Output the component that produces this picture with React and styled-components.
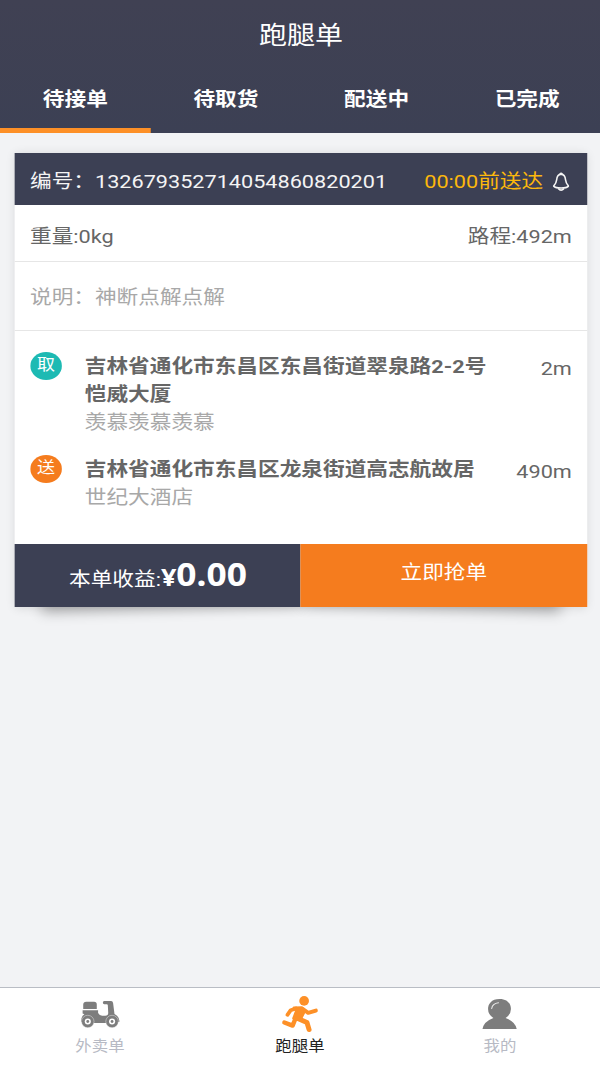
import styled, { createGlobalStyle } from 'styled-components'
import { useState } from 'react'

const tabs = ['待接单', '待取货', '配送中', '已完成']

export default function App() {
  const [tab, setTab] = useState(0)
  return (
    <>
      <GlobalStyle />
      <Screen>
        <Header>
          <Title>跑腿单</Title>
          <Tabs>
            {tabs.map((name, i) => (
              <Tab key={name} $active={tab === i} onClick={() => setTab(i)}>{name}</Tab>
            ))}
          </Tabs>
        </Header>

        <Main>
          <Card>
            <CardHead>
              <span>编号：132679352714054860820201</span>
              <Deadline>
                <span>00:00前送达</span>
                <BellIcon />
              </Deadline>
            </CardHead>
            <InfoRow>
              <span>重量:0kg</span>
              <span>路程:492m</span>
            </InfoRow>
            <NoteRow>说明：神断点解点解</NoteRow>
            <Stops>
              <Stop>
                <Badge $color="#1dbab3">取</Badge>
                <Place>
                  <Address>吉林省通化市东昌区东昌街道翠泉路2-2号恺威大厦</Address>
                  <Detail>羡慕羡慕羡慕</Detail>
                </Place>
                <Distance>2m</Distance>
              </Stop>
              <Stop>
                <Badge $color="#f57c1e">送</Badge>
                <Place>
                  <Address>吉林省通化市东昌区龙泉街道高志航故居</Address>
                  <Detail>世纪大酒店</Detail>
                </Place>
                <Distance>490m</Distance>
              </Stop>
            </Stops>
            <CardFoot>
              <Income>
                本单收益:<Yen>¥</Yen><Amount>0.00</Amount>
              </Income>
              <GrabButton>立即抢单</GrabButton>
            </CardFoot>
          </Card>
        </Main>

        <NavBar>
          <NavItem>
            <ScooterIcon />
            外卖单
          </NavItem>
          <NavItem $active>
            <RunnerIcon />
            跑腿单
          </NavItem>
          <NavItem>
            <UserIcon />
            我的
          </NavItem>
        </NavBar>
      </Screen>
    </>
  )
}

function BellIcon() {
  return (
    <Bell viewBox="0 0 18 20" preserveAspectRatio="none" fill="none" stroke="#f4f4f4" strokeWidth="1.6" strokeLinejoin="round">
      <path d="M9 2.200C6 2.400 4.700 5 4.400 8C4.100 11 3 12.600 1.300 14.500C3 16.200 5 16.500 9 16.500S15 16.200 16.700 14.500C15 12.600 13.900 11 13.600 8C13.300 5 12 2.400 9 2.200Z" />
      <path d="M7.800 2.200Q9 .4 10.200 2.200M6 16.800Q9 20.400 12 16.800" />
    </Bell>
  )
}

function ScooterIcon() {
  return (
    <NavIcon viewBox="0 0 40 40" preserveAspectRatio="none" fill="#7d7d7d">
      <path d="M3.300 13V8.700Q3.300 5.700 6.300 5.700H14Q16.700 5.700 16.700 8.500V13Z" />
      <path d="M2.700 14.200H18V17Q19.500 19.800 22 19.800H25Q28 19.800 28 17L27.600 9.300Q27.600 8.200 26.500 8.200H24Q22.700 8.200 22.700 6.600T24 5H30.800Q32.500 5 32.800 7L34.200 18Q38.800 20 39.200 25.500L36 27H3L1.200 25.500Q1 20.500 4.500 18.300L2.700 17.500Z" />
      <g stroke="#fff" strokeWidth=".4">
        <circle cx="7.800" cy="25.500" r="6.200" />
        <circle cx="31.800" cy="25.500" r="6.200" />
      </g>
      <circle cx="7.800" cy="25.500" r="3" fill="#fff" />
      <circle cx="31.800" cy="25.500" r="3" fill="#fff" />
      <circle cx="7.800" cy="25.500" r="1.400" />
      <circle cx="31.800" cy="25.500" r="1.400" />
    </NavIcon>
  )
}

function RunnerIcon() {
  return (
    <NavIcon viewBox="0 0 40 40" preserveAspectRatio="none" fill="none" stroke="#fd9027" strokeLinecap="round" strokeLinejoin="round">
      <circle cx="23.700" cy="4.900" r="4.800" fill="#fd9027" stroke="none" />
      <path d="M15.500 12.500L10.500 14.200L7.200 18.800" strokeWidth="3.800" />
      <path d="M22.500 13L27.700 16.900L35.300 14.600" strokeWidth="3.900" />
      <path d="M13.500 11.600L21.500 11.300L24.800 14.500L20 24L13 22.500L15.800 15Z" fill="#fd9027" strokeWidth="2.200" />
      <path d="M15 23L12.300 29.600L4.200 26.500" strokeWidth="4.400" />
      <path d="M17.500 22.500L26.500 26.500L28.600 33.600" strokeWidth="4.900" />
    </NavIcon>
  )
}

function UserIcon() {
  return (
    <NavIcon viewBox="0 0 40 40" preserveAspectRatio="none">
      <path fill="#7d7d7d" d="M20 3C12 3 8.700 8 8.700 13Q8.700 18.500 14 22Q4.500 25.500 3.200 33H37Q35.500 25.500 26 22Q31.300 18.500 31.300 13C31.300 8 28 3 20 3Z" />
      <path fill="none" stroke="#e8e8e8" strokeWidth="1.100" strokeLinecap="round" d="M12.300 12.500Q13 7.500 19 6.700" />
    </NavIcon>
  )
}

const GlobalStyle = createGlobalStyle`
  * { box-sizing: border-box; }
  body {
    margin: 0;
    overflow: hidden;
    background: #f2f3f5;
  }
`
// the screen is stretched sideways: 533.33 * 1.125 = 600
const Screen = styled.div`
  width: 534px;
  height: 1067px;
  display: flex;
  flex-direction: column;
  transform: scaleX(1.125);
  transform-origin: 0 0;
  background: #f2f3f5;
  color: #666;
  font-family: Roboto, "Noto Sans CJK SC", sans-serif;
  font-size: 19.25px;
  white-space: nowrap;
`
const Header = styled.header`
  height: 132.6px;
  color: #fff;
  background: linear-gradient(#404153, #3c4054);
`
const Title = styled.h1`
  margin: 0;
  height: 66px;
  padding-left: 1px;
  line-height: 71px;
  text-align: center;
  font-size: 24.9px;
  font-weight: 400;
`
const Tabs = styled.div`
  display: flex;
  height: 66.6px;
`
const Tab = styled.div`
  flex: 0 0 133.9px;
  text-align: center;
  line-height: 68.500px;
  font-weight: 700;
  border-bottom: 5px solid ${props => props.$active ? '#fd9027' : 'transparent'};
`
const Main = styled.main`
  flex: 1;
  padding: 20.6px 12.4px 0 13.33px;
`
const Card = styled.section`
  position: relative;
  background: #fff;
  box-shadow: 0 1px 9px rgba(0, 0, 0, .12);

  /* lifted corners */
  &::before, &::after {
    content: '';
    position: absolute;
    z-index: -1;
    bottom: 16px;
    width: 45%;
    height: 40px;
    box-shadow: 0 17px 13px rgba(0, 0, 0, .3);
  }
  &::before {
    left: 23px;
    transform: rotate(-2deg);
  }
  &::after {
    right: 23px;
    transform: rotate(2deg);
  }
`
const CardHead = styled.div`
  display: flex;
  justify-content: space-between;
  height: 52px;
  padding: 0 13.33px;
  line-height: 57px;
  color: #f4f4f4;
  background: #3c4054;
`
const Deadline = styled.span`
  display: flex;
  align-items: flex-start;
  gap: 8px;
  padding-right: 2px;
  color: #fcb80c;
`
const Bell = styled.svg`
  width: 15.500px;
  height: 19.500px;
  margin-top: 18.500px;
`
const InfoRow = styled.div`
  display: flex;
  justify-content: space-between;
  height: 56.500px;
  padding: 0 13.33px;
  line-height: 63.500px;
  border-bottom: 1px solid #e6e6e6;
`
const NoteRow = styled.div`
  height: 69px;
  padding: 0 13.33px;
  line-height: 72px;
  color: #a8a8a8;
  border-bottom: 1px solid #e6e6e6;
`
const Stops = styled.div`
  height: 213.6px;
  padding: 21px 13.33px 0;
`
const Stop = styled.div`
  display: flex;
  align-items: flex-start;
  margin-bottom: 18.6px;
`
const Badge = styled.span`
  width: 28.4px;
  height: 28.4px;
  border-radius: 50%;
  margin-right: 20.3px;
  color: #fff;
  background: ${props => props.$color};
  font-size: 16px;
  line-height: 25.500px;
  text-align: center;
`
const Place = styled.div`
  width: 362px;
  padding-top: 1.3px;
  line-height: 27.8px;
  white-space: normal;
`
const Address = styled.div`
  font-weight: 700;
`
const Detail = styled.div`
  color: #a8a8a8;
`
const Distance = styled.span`
  margin-left: auto;
  line-height: 33.500px;
`
const CardFoot = styled.div`
  display: flex;
  height: 63px;
  color: #fff;
`
const Income = styled.div`
  flex: 1;
  display: flex;
  align-items: baseline;
  justify-content: center;
  line-height: 59px;
  background: #3c4054;
`
const Yen = styled.b`
  font-family: "Noto Sans", sans-serif;
  font-size: 24px;
`
const Amount = styled.b`
  font-family: "Noto Sans", sans-serif;
  font-size: 31.4px;
`
const GrabButton = styled.div`
  flex: 1;
  text-align: center;
  line-height: 57px;
  background: #f57c1e;
`
const NavBar = styled.nav`
  display: flex;
  height: 80px;
  border-top: 1.500px solid #b9bdc4;
  background: #fff;
`
const NavItem = styled.div`
  flex: 0 0 177.78px;
  display: flex;
  flex-direction: column;
  align-items: center;
  padding-top: 7.500px;
  line-height: 21px;
  font-size: 14.6px;
  color: ${props => props.$active ? '#222' : '#b7bac4'};
`
const NavIcon = styled.svg`
  width: 36px;
  height: 40px;
`
